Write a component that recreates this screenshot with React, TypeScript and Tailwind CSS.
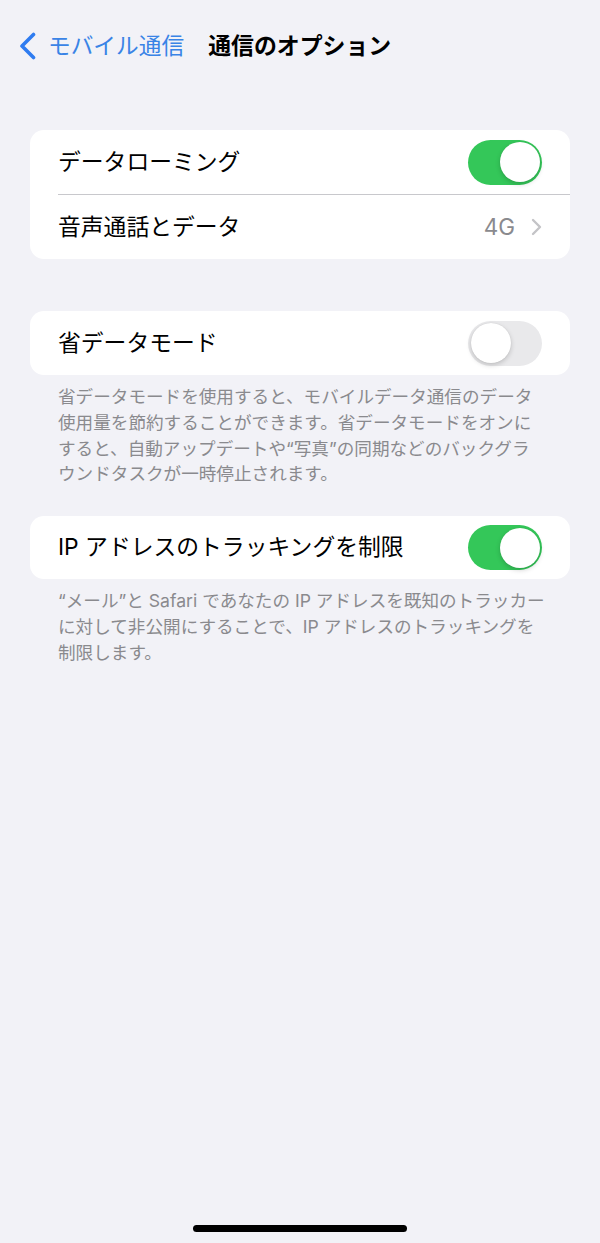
import React from "react";

const Toggle: React.FC<{ on: boolean }> = ({ on }) => (
  <div
    className={`relative w-[74px] h-[45px] rounded-full shrink-0 ${
      on ? "bg-[#34c759]" : "bg-[#e9e9eb]"
    }`}
  >
    <div
      className={`absolute top-[2.5px] w-[40px] h-[40px] rounded-full bg-white shadow-[0_2px_5px_rgba(0,0,0,0.18),0_0_1px_rgba(0,0,0,0.12)] ${
        on ? "right-[2.5px]" : "left-[2.5px]"
      }`}
    />
  </div>
);

const Row: React.FC<{ label: string; height: string; children?: React.ReactNode }> = ({
  label,
  height,
  children,
}) => (
  <div className={`flex items-center justify-between pr-[28px] ${height}`}>
    <span className="text-[22.8px] text-black leading-none">{label}</span>
    {children}
  </div>
);

const Footer: React.FC<{ lines: string[] }> = ({ lines }) => (
  <p className="pl-[28px] pt-[9px] text-[17.6px] leading-[25.8px] text-[#8a8a8e]">
    {lines.map((l, i) => (
      <React.Fragment key={i}>
        {l}
        {i < lines.length - 1 && <br />}
      </React.Fragment>
    ))}
  </p>
);

export default function App() {
  return (
    <div className="relative w-[600px] h-[1243px] bg-[#f2f2f7] overflow-hidden font-['Inter','Noto_Sans_CJK_JP',sans-serif]">
      {/* Nav bar */}
      <div className="flex items-center h-[44px] mt-[24px] pl-[19px]">
        <svg width="17" height="28" viewBox="0 0 17 28" className="shrink-0">
          <polyline
            points="14.5,2.5 3,14 14.5,25.5"
            fill="none"
            stroke="#2f7cf0"
            strokeWidth="3.6"
            strokeLinecap="round"
            strokeLinejoin="round"
          />
        </svg>
        <span className="ml-[12px] text-[22.7px] text-[#3a84e6] leading-none">
          モバイル通信
        </span>
        <span className="ml-[24px] text-[22.9px] font-bold text-black leading-none">
          通信のオプション
        </span>
      </div>

      <div className="flex flex-col px-[30px] mt-[62px]">
        {/* Card 1 */}
        <div className="bg-white rounded-[14px] pl-[28px]">
          <Row label="データローミング" height="h-[64px]">
            <Toggle on />
          </Row>
          <div className="h-px bg-[#c8c8cc]" />
          <Row label="音声通話とデータ" height="h-[64px]">
            <div className="flex items-center gap-[16px]">
              <span className="text-[22.5px] text-[#8a8a8e] leading-none">4G</span>
              <svg width="11" height="18" viewBox="0 0 11 18">
                <polyline
                  points="2,2 9,9 2,16"
                  fill="none"
                  stroke="#c4c4c7"
                  strokeWidth="2.4"
                  strokeLinecap="round"
                  strokeLinejoin="round"
                />
              </svg>
            </div>
          </Row>
        </div>

        {/* Card 2 */}
        <div className="bg-white rounded-[14px] pl-[28px] mt-[52px]">
          <Row label="省データモード" height="h-[64px]">
            <Toggle on={false} />
          </Row>
        </div>
        <Footer
          lines={[
            "省データモードを使用すると、モバイルデータ通信のデータ",
            "使用量を節約することができます。省データモードをオンに",
            "すると、自動アップデートや“写真”の同期などのバックグラ",
            "ウンドタスクが一時停止されます。",
          ]}
        />

        {/* Card 3 */}
        <div className="bg-white rounded-[14px] pl-[28px] mt-[29px]">
          <Row label="IP アドレスのトラッキングを制限" height="h-[63px]">
            <Toggle on />
          </Row>
        </div>
        <Footer
          lines={[
            "“メール”と Safari であなたの IP アドレスを既知のトラッカー",
            "に対して非公開にすることで、IP アドレスのトラッキングを",
            "制限します。",
          ]}
        />
      </div>

      {/* Home indicator */}
      <div className="absolute left-[193px] top-[1225px] w-[214px] h-[7px] rounded-full bg-black" />
    </div>
  );
}
